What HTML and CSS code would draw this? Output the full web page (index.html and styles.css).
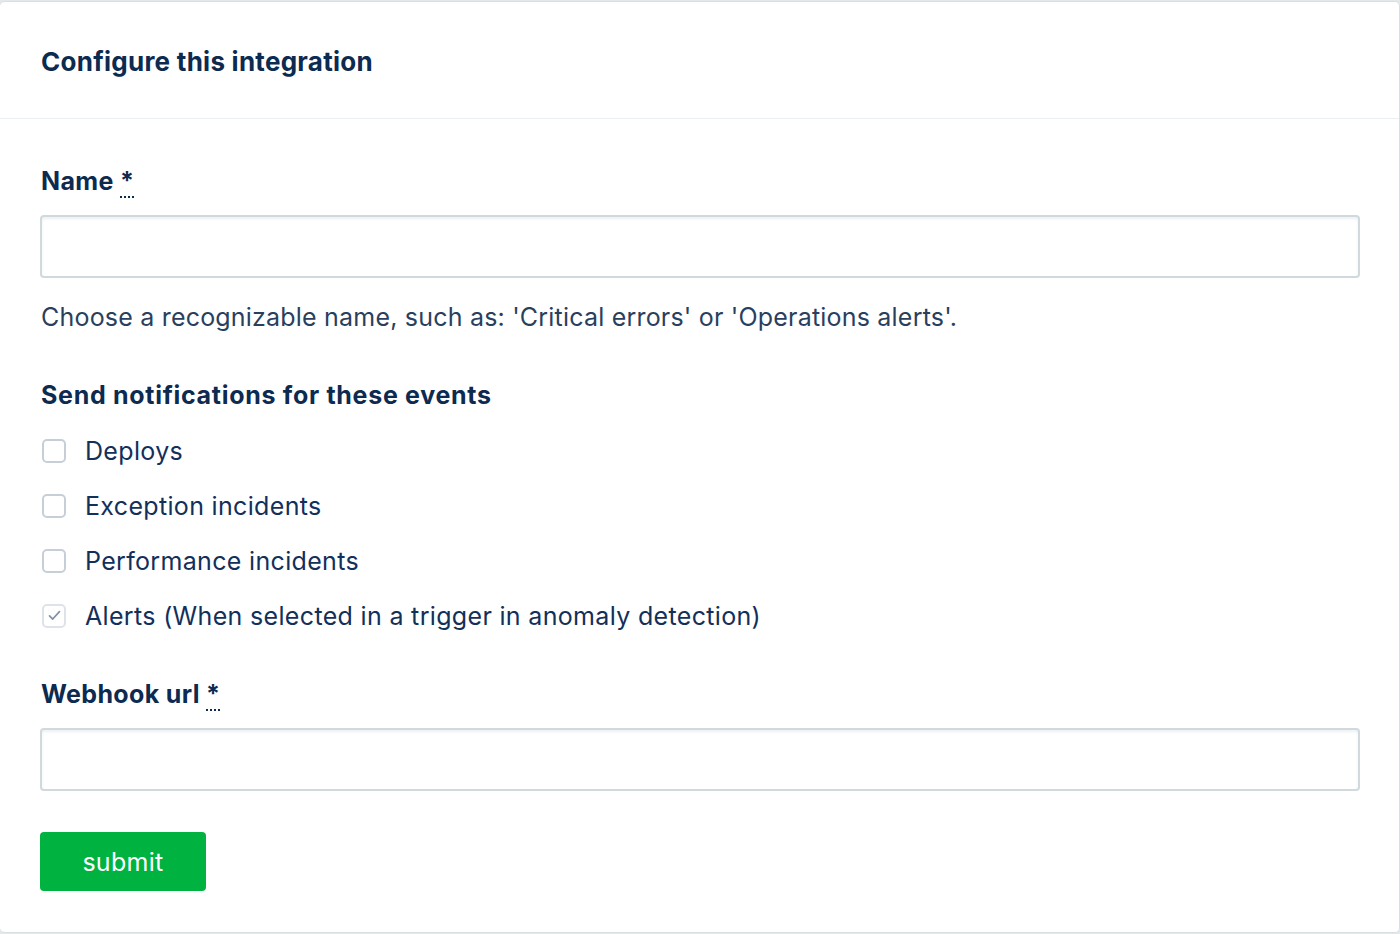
FILE: index.html
```html
<!DOCTYPE html>
<html>
<head>
<meta charset="utf-8">
<link rel="stylesheet" href="styles.css">
</head>
<body>
<div class="card">
  <div class="card-header">
    <h2 class="card-title">Configure this integration</h2>
  </div>
  <form class="card-body">
    <div class="field">
      <label class="label">Name <abbr title="required">*</abbr></label>
      <input class="input" type="text">
      <p class="hint">Choose a recognizable name, such as: 'Critical errors' or 'Operations alerts'.</p>
    </div>
    <div class="field">
      <div class="label group-label">Send notifications for these events</div>
      <ul class="checks">
        <li class="check"><span class="box"></span><span>Deploys</span></li>
        <li class="check"><span class="box"></span><span>Exception incidents</span></li>
        <li class="check"><span class="box"></span><span>Performance incidents</span></li>
        <li class="check"><span class="box checked"><svg viewBox="0 0 24 24" width="17" height="17"><path d="M5 12.5l4.5 4.5L19 6.5" fill="none" stroke="#8290a4" stroke-width="2.4" stroke-linecap="round" stroke-linejoin="round"/></svg></span><span>Alerts (When selected in a trigger in anomaly detection)</span></li>
      </ul>
    </div>
    <div class="field last">
      <label class="label">Webhook url <abbr title="required">*</abbr></label>
      <input class="input" type="text">
    </div>
    <button class="submit" type="button">submit</button>
  </form>
</div>
</body>
</html>
```

FILE: styles.css
```css
html, body {
  margin: 0;
  padding: 0;
  background: #e4e8eb;
}
body {
  font-family: Inter, "Noto Sans", sans-serif;
  color: #0f2a51;
  padding-top: 1px;
}
.card {
  background: #fff;
  border: 1px solid #d8dfe3;
  border-left: none;
  border-radius: 5px;
  height: 932px;
  box-sizing: border-box;
}
.card-header {
  height: 117px;
  border-bottom: 1px solid #eceff1;
  padding: 0 40px;
  display: flex;
  align-items: center;
  box-sizing: border-box;
}
.card-title {
  margin: 2px 0 0 1px;
  font-size: 26px;
  font-weight: 700;
  color: #0d2a50;
  letter-spacing: 0.26px;
}
.card-body {
  padding: 47px 40px 0 40px;
  margin: 0;
}
.field {
  margin-bottom: 47px;
}
.field.last {
  margin-bottom: 41px;
}
.label {
  display: block;
  font-size: 25px;
  font-weight: 700;
  color: #0d2a50;
  line-height: 30px;
  margin-bottom: 19px;
  margin-left: 1px;
  letter-spacing: 0.35px;
}
.group-label {
  letter-spacing: 0.7px;
}
.label abbr {
  text-decoration: none;
  border-bottom: 2px dotted #0d2a50;
  cursor: help;
}
.input {
  display: block;
  box-sizing: border-box;
  width: 1320px;
  height: 63px;
  border: 2px solid #d0d9de;
  border-radius: 4px;
  box-shadow: inset 0 2px 3px rgba(20, 40, 60, 0.07);
  background: #fff;
  font: inherit;
  font-size: 24px;
  padding: 0 16px;
  margin: 0;
}
.hint {
  margin: 23px 0 0 1px;
  font-size: 25px;
  line-height: 32px;
  color: #2a3f5e;
  letter-spacing: 0.2px;
}
.checks {
  list-style: none;
  margin: -6px 0 -11px 0;
  padding: 0;
}
.check {
  display: flex;
  align-items: center;
  height: 55px;
  font-size: 25px;
  color: #12305a;
  margin-left: 2px;
  letter-spacing: 0.33px;
}
.box {
  width: 20px;
  height: 20px;
  border: 2px solid #c6cfd8;
  border-radius: 5px;
  margin-right: 19px;
  display: flex;
  align-items: center;
  justify-content: center;
  background: #fff;
  flex: none;
}
.box.checked {
  border-color: #dde3e8;
}
.submit {
  display: block;
  width: 166px;
  height: 59px;
  margin: 0;
  background: #00b341;
  color: #fff;
  border: none;
  border-radius: 4px;
  font-family: Inter, "Noto Sans", sans-serif;
  font-size: 25px;
  letter-spacing: 0.3px;
  cursor: pointer;
}
```
